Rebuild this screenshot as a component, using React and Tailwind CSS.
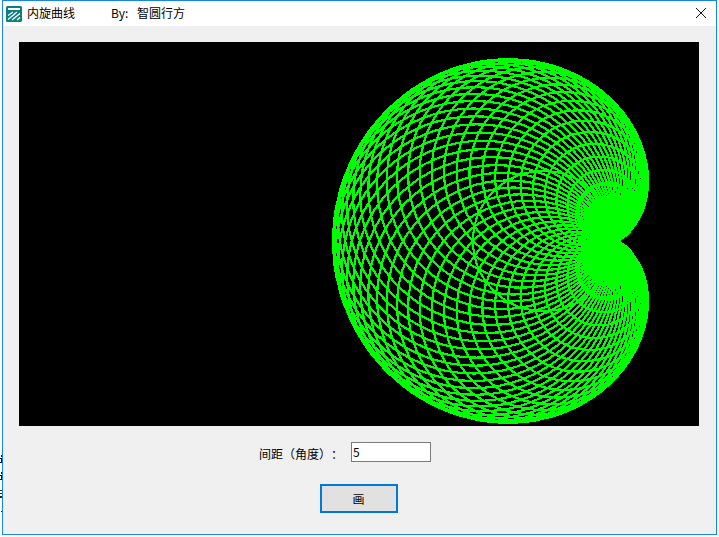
import React from 'react';

const cjk = '"Noto Sans CJK SC", "Liberation Sans", sans-serif';

// circles through the cusp, centres walk around the base circle
const CX = 524;
const CY = 199;
const A = 70;

function Curve({ step = 6 }) {
  const circles = [];
  for (let deg = 0; deg < 360; deg += step) {
    const t = (deg * Math.PI) / 180;
    const x = CX + A * Math.cos(t);
    const y = CY + A * Math.sin(t);
    const r = Math.hypot(x - (CX + A), y - CY);
    // the tight loops by the cusp merge into solid green in the reference
    circles.push(<circle key={deg} cx={x} cy={y} r={r} strokeWidth={r < 32 ? 4 : 2.2} />);
  }
  return (
    <svg width="680" height="384" viewBox="0 0 680 384" className="block bg-black">
      <g fill="none" stroke="#00ff00" strokeWidth="2" shapeRendering="crispEdges">
        {circles}
        <circle cx={CX} cy={CY} r={A} />
      </g>
    </svg>
  );
}

function AppIcon() {
  return (
    <svg width="16" height="16" viewBox="0 0 16 16" className="block">
      <rect width="16" height="16" rx="1.5" fill="#0e7f80" />
      <rect x="2" y="2" width="12" height="2" fill="#fff" />
      <path d="M2 9.5l5-3.5M2 13.5l9-7.5M6 14l8-6.5M11 14l3-2.5" stroke="#fff" strokeWidth="1.3" fill="none" />
    </svg>
  );
}

// slivers of the window behind, showing left of the frame
const slivers = [
  { top: 455, left: 1, width: 1, height: 2, color: 'bg-[#00008b]' },
  { top: 458, left: 0, width: 2, height: 1, color: 'bg-[#00008b]' },
  { top: 458, left: 1, width: 1, height: 5, color: 'bg-[#00008b]' },
  { top: 462, left: 0, width: 2, height: 1, color: 'bg-[#00008b]' },
  { top: 472, left: 1, width: 1, height: 2, color: 'bg-[#00008b]' },
  { top: 475, left: 0, width: 2, height: 1, color: 'bg-[#00008b]' },
  { top: 475, left: 1, width: 1, height: 5, color: 'bg-[#00008b]' },
  { top: 479, left: 0, width: 2, height: 1, color: 'bg-[#00008b]' },
  { top: 490, left: 0, width: 2, height: 1, color: 'bg-[#222222]' },
  { top: 493, left: 0, width: 2, height: 1, color: 'bg-[#222222]' },
  { top: 496, left: 0, width: 2, height: 2, color: 'bg-[#222222]' },
  { top: 511, left: 1, width: 1, height: 1, color: 'bg-[#222222]' },
];

export default function App() {
  return (
    <div className="relative w-[719px] h-[537px] bg-white pl-[2px] pr-[2px] pb-[2px] overflow-hidden" style={{ fontFamily: cjk }}>
      {slivers.map((s) => (
        <div key={`${s.top}-${s.left}`} className={`absolute ${s.color}`} style={{ top: s.top, left: s.left, width: s.width, height: s.height }} />
      ))}
      <div className="h-full border border-[#1787e0] flex flex-col">
        <div className="h-[25px] bg-white flex items-center pl-[3px] text-[12px] text-black">
          <AppIcon />
          <span className="ml-[5px] w-[84px] mb-[1px]">内旋曲线</span>
          <span className="mb-[1px] w-[26px]">By:</span>
          <span className="mb-[1px]">智圆行方</span>
          <svg width="12" height="12" viewBox="0 0 12 12" className="ml-auto mr-[9px] mb-[1px]">
            <path d="M1 1l10 10M11 1L1 11" stroke="#111" strokeWidth="1" fill="none" />
          </svg>
        </div>
        <div className="flex-1 bg-[#f0f0f0] flex flex-col items-center pt-[16px]">
          <div className="mr-[1px]">
            <Curve />
          </div>
          <div className="flex items-center mt-[16px] h-[20px] mr-[29px]">
            <span className="w-[92px] mt-[3px] text-[12px] text-black whitespace-nowrap [text-spacing-trim:space-all]">间距（角度）：</span>
            <input
              defaultValue="5"
              className="w-[80px] h-[20px] bg-white border border-[#7a7a7a] px-[1px] pb-[2px] text-[12px] text-black outline-none"
            />
          </div>
          <button className="mt-[22px] mr-[2px] w-[78px] h-[29px] bg-[#e1e1e1] border-2 border-[#0078d7] text-[12px] text-black">画</button>
        </div>
      </div>
    </div>
  );
}
